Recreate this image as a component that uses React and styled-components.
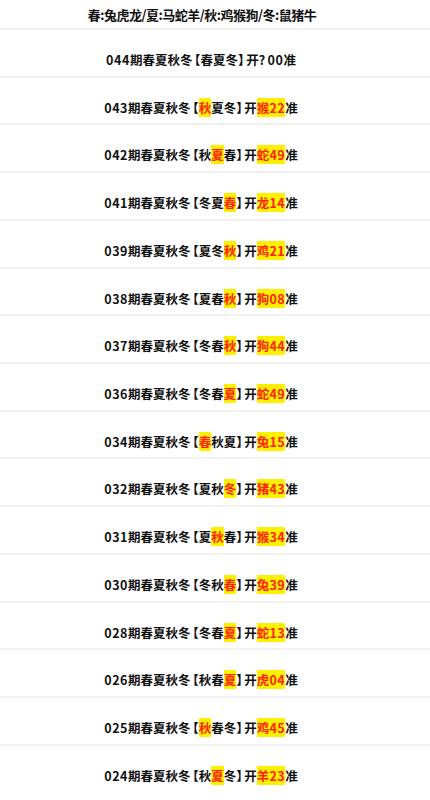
import styled, { createGlobalStyle } from 'styled-components'

const GlobalStyle = createGlobalStyle`
  html, body {
    margin: 0;
    padding: 0;
    background: #fff;
  }
  body {
    font-family: "Noto Sans CJK SC", "Noto Sans", sans-serif;
    color: #111;
  }
`

const rows = [
  { no: '044', set: ['春', '夏', '冬'], hlIndex: -1, animal: '?', num: ' 00' },
  { no: '043', set: ['秋', '夏', '冬'], hlIndex: 0, animal: '猴', num: '22' },
  { no: '042', set: ['秋', '夏', '春'], hlIndex: 1, animal: '蛇', num: '49' },
  { no: '041', set: ['冬', '夏', '春'], hlIndex: 2, animal: '龙', num: '14' },
  { no: '039', set: ['夏', '冬', '秋'], hlIndex: 2, animal: '鸡', num: '21' },
  { no: '038', set: ['夏', '春', '秋'], hlIndex: 2, animal: '狗', num: '08' },
  { no: '037', set: ['冬', '春', '秋'], hlIndex: 2, animal: '狗', num: '44' },
  { no: '036', set: ['冬', '春', '夏'], hlIndex: 2, animal: '蛇', num: '49' },
  { no: '034', set: ['春', '秋', '夏'], hlIndex: 0, animal: '兔', num: '15' },
  { no: '032', set: ['夏', '秋', '冬'], hlIndex: 2, animal: '猪', num: '43' },
  { no: '031', set: ['夏', '秋', '春'], hlIndex: 1, animal: '猴', num: '34' },
  { no: '030', set: ['冬', '秋', '春'], hlIndex: 2, animal: '兔', num: '39' },
  { no: '028', set: ['冬', '春', '夏'], hlIndex: 2, animal: '蛇', num: '13' },
  { no: '026', set: ['秋', '春', '夏'], hlIndex: 2, animal: '虎', num: '04' },
  { no: '025', set: ['秋', '春', '冬'], hlIndex: 0, animal: '鸡', num: '45' },
  { no: '024', set: ['秋', '夏', '冬'], hlIndex: 1, animal: '羊', num: '23' },
]

function App() {
  return (
    <Page>
      <GlobalStyle />
      <Header>春:兔虎龙/夏:马蛇羊/秋:鸡猴狗/冬:鼠猪牛</Header>
      <List>
        {rows.map((r) => {
          const open = r.hlIndex >= 0
          return (
            <Row key={r.no}>
              <Line>
                <Num>{r.no}</Num>期春夏秋冬 <Bracket>【</Bracket>
                {r.set.map((s, i) =>
                  i === r.hlIndex ? <Mark key={i}>{s}</Mark> : <span key={i}>{s}</span>
                )}
                <Bracket>】</Bracket> 开
                {open ? (
                  <Mark>
                    {r.animal}
                    <Num>{r.num}</Num>
                  </Mark>
                ) : (
                  <span>
                    {r.animal}
                    <Num>{r.num}</Num>
                  </span>
                )}
                准
              </Line>
            </Row>
          )
        })}
      </List>
    </Page>
  )
}

const Page = styled.div`
  width: 430px;
  height: 800px;
  overflow: hidden;
  background: #fff;
`

const Header = styled.div`
  height: 28px;
  display: flex;
  align-items: center;
  justify-content: center;
  padding-right: 26px;
  font-size: 13px;
  font-weight: 700;
  letter-spacing: -0.5px;
  color: #111;
`

const List = styled.div`
  display: flex;
  flex-direction: column;
`

const Row = styled.div`
  height: 47.73px;
  box-sizing: border-box;
  border-top: 2px solid #f1f1f1;
  display: flex;
  justify-content: center;
  padding: 21px 28px 0 0;
`

const Line = styled.div`
  font-size: 12.5px;
  line-height: 18px;
  font-weight: 700;
  color: #111;
  white-space: pre;
  word-spacing: -1px;
`

const Num = styled.span`
  letter-spacing: 0.6px;
`

const Bracket = styled.span`
  font-feature-settings: "halt";
`

const Mark = styled.span`
  background: #fff000;
  color: #ff2200;
`

export default App
